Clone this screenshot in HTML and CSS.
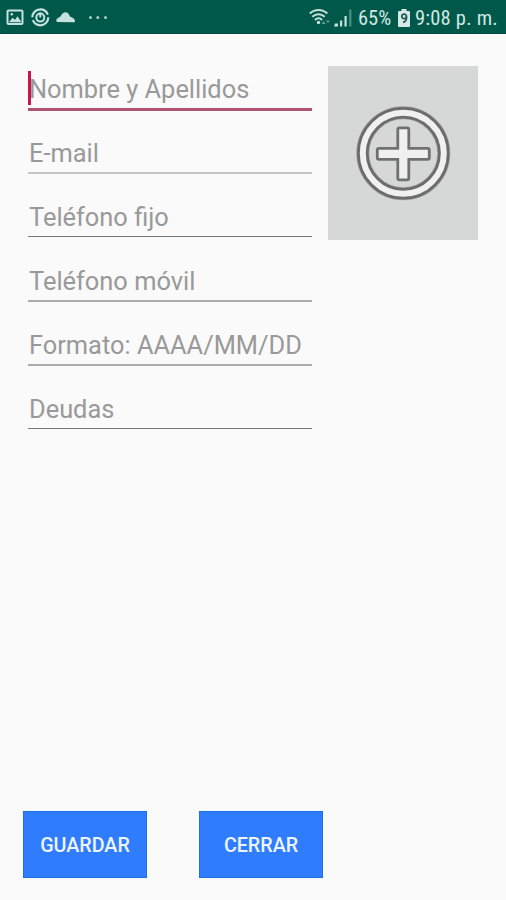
FILE: index.html
```
<!DOCTYPE html>
<html lang="es">
<head>
  <meta charset="UTF-8" />
  <meta name="viewport" content="width=device-width, initial-scale=1.0" />
  <title>Contacto</title>
  <link rel="stylesheet" href="styles.css">
</head>
<body>
  <header class="status-bar">
    <!-- Notifications -->
    <svg class="status-icons" width="104" height="20" viewBox="0 0 104 20">
      <rect x="2.500" y="2.500" width="15" height="13.400" rx="1" fill="none" stroke="#c5e2dc" stroke-width="2" />
      <path d="M4 14.300l3.500-4.500 2.500 2 2.500-3.500 4 6z" fill="#c5e2dc" />
      <circle cx="6.800" cy="6.300" r="1.300" fill="#c5e2dc" />
      <circle cx="35.300" cy="9.300" r="8" fill="none" stroke="#c5e2dc" stroke-width="2.200" stroke-dasharray="22 3.130" />
      <circle cx="35.300" cy="9.600" r="4" fill="none" stroke="#c5e2dc" stroke-width="2" />
      <path d="M35.300 4.500v5" stroke="#c5e2dc" stroke-width="2" />
      <path d="M52.700 14c-1.700 0-1.900-3 0-3.800l3-2c2.200-5 7-5 8.800-.8l.8 1.300c2.700.6 4.700 2.500 4.700 4.200 0 .8-.5 1.300-1.300 1.300z" fill="#c5e2dc" />
      <g fill="#a9cfc7">
        <circle cx="85.500" cy="9.600" r="1.500" />
        <circle cx="92.800" cy="9.600" r="1.500" />
        <circle cx="100.500" cy="9.600" r="1.500" />
      </g>
    </svg>
    <div class="status-right">
      <!-- Wifi and signal -->
      <svg width="45" height="20" viewBox="0 0 45 20">
        <g fill="none" stroke="#c5e2dc" stroke-width="2">
          <path d="M.8 5.400c5-4.700 12.500-4.700 17.500 0" />
          <path d="M3.300 8.700c3.700-3.400 8.700-3.400 12.400 0" />
          <path d="M5.900 11.900c2.200-2 5-2 7.200 0" />
        </g>
        <circle cx="9.500" cy="14.500" r="1.700" fill="#c5e2dc" />
        <path d="M12.500 16l2.200-3 2.200 3zM17 12.500h4l-2 2.800z" fill="#5d9b8f" />
        <path d="M26 15.500h3v3h-4zM31 12.500h2.200v6h-2.200zM35.500 8h2.200v10.500h-2.200z" fill="#c5e2dc" />
        <path d="M40.200 1.500h2.200v17h-2.200z" fill="#4d9083" />
      </svg>
      <span class="battery-level">65%</span>
      <svg class="battery" width="12" height="18" viewBox="0 0 12 18">
        <path d="M3.500 0h5v2h2.500q1 0 1 1v14q0 1-1 1h-10q-1 0-1-1v-14q0-1 1-1h2.500z" fill="#d5eae6" />
        <path d="M8.200 6.500a2.300 2.300 0 1 0-.2 2.100l.5-2.100v2.500c0 2-1 3.700-3.500 4.500" fill="none" stroke="#1b5a50" stroke-width="1.700" />
      </svg>
      <span class="clock">9:08 p. m.</span>
    </div>
  </header>

  <form class="contact-form" action="" method="get" name="contactForm" novalidate>
    <div class="contact-data">
      <div class="fields">
        <div class="field focused">
          <input type="text" name="nombre" placeholder="Nombre y Apellidos" />
        </div>
        <div class="field light">
          <input type="email" name="email" placeholder="E-mail" />
        </div>
        <div class="field">
          <input type="tel" name="fijo" placeholder="Teléfono fijo" />
        </div>
        <div class="field medium">
          <input type="tel" name="movil" placeholder="Teléfono móvil" />
        </div>
        <div class="field medium">
          <input type="text" name="fecha" placeholder="Formato: AAAA/MM/DD" />
        </div>
        <div class="field">
          <input type="text" name="deudas" placeholder="Deudas" />
        </div>
      </div>

      <!-- Add photo -->
      <button type="button" class="photo" aria-label="Agregar foto">
        <svg width="96" height="96" viewBox="0 0 96 96">
          <g fill="none">
            <circle cx="48.300" cy="48.300" r="40.500" stroke="#a0a1a1" stroke-width="13" />
            <circle cx="48.300" cy="48.300" r="40.500" stroke="#6c6c6c" stroke-width="11.500" />
            <circle cx="48.300" cy="48.300" r="40.500" stroke="#f0f0f0" stroke-width="6" />
          </g>
          <path d="M44.300 22.800h8q1.500 0 1.500 1.500v19h19q1.500 0 1.500 1.500v8q0 1.500-1.500 1.500h-19v19q0 1.500-1.500 1.500h-8q-1.500 0-1.500-1.500v-19h-19q-1.500 0-1.500-1.500v-8q0-1.500 1.500-1.500h19v-19q0-1.500 1.500-1.500z" fill="#f0f0f0" stroke="#707070" stroke-width="2.800" />
        </svg>
      </button>
    </div>

    <div class="actions">
      <button type="submit">GUARDAR</button>
      <button type="button">CERRAR</button>
    </div>
  </form>
</body>
</html>
```
FILE: styles.css
```
* {
  box-sizing: border-box;
}

body {
  font-family: Roboto, "Liberation Sans", sans-serif;
  background: #fafafa;
  margin: 0;
  height: 100vh;
  display: flex;
  flex-direction: column;
}

.status-bar {
  height: 34px;
  background: #00584a;
  border-bottom: 1px solid #004a3e;
  color: #d0e8e3;
  display: flex;
  justify-content: space-between;
  align-items: center;
  padding: 2px 8px 0 5px;
}

.status-right {
  display: flex;
  align-items: center;
}

.status-right span {
  font-family: "Roboto Condensed", Roboto, sans-serif;
  font-stretch: condensed;
  font-size: 20.5px;
  line-height: 32px;
  white-space: nowrap;
}

.battery-level {
  width: 33px;
  margin-left: 4px;
}

.battery {
  margin: 0 5px 0 7px;
}

.clock {
  width: 83px;
  letter-spacing: 0.2px;
}

.contact-form {
  flex: 1;
  display: flex;
  flex-direction: column;
  justify-content: space-between;
  padding: 32px 28px 22px 23px;
}

.contact-data {
  display: flex;
  justify-content: space-between;
  align-items: flex-start;
}

.fields {
  width: 284px;
  margin-left: 5px;
}

.field {
  height: 64px;
}

.field input {
  display: block;
  width: 100%;
  height: 43px;
  margin: 0;
  padding: 4px 0 0 1px;
  border: none;
  border-bottom: 1px solid #777;
  background: none;
  font-family: inherit;
  font-size: 25.4px;
  outline: none;
}

.field input::placeholder {
  color: #999;
  opacity: 1;
}

.field.light input {
  height: 44px;
  border-bottom: 2px solid #c5c5c5;
}

.field.medium input {
  height: 44px;
  border-bottom: 2px solid #aaa;
}

.field.focused input {
  height: 45px;
  border-bottom: 3px solid #ae5472;
}

/* text cursor */
.field.focused {
  position: relative;
}

.field.focused::before {
  content: "";
  position: absolute;
  left: 0;
  top: 5px;
  width: 3px;
  height: 34px;
  background: #c2184f;
}

.photo {
  width: 150px;
  height: 174px;
  padding: 0;
  border: none;
  background: #d6d8d7;
  display: flex;
  align-items: center;
  justify-content: center;
}

.actions {
  display: flex;
  gap: 52px;
}

.actions button {
  width: 124px;
  height: 67px;
  padding: 2px 0 0;
  border: 1px solid #1a70e8;
  background: #2f7dfe;
  color: #eef5ff;
  font-family: inherit;
  font-size: 19.7px;
  font-weight: 500;
  cursor: pointer;
}
```
